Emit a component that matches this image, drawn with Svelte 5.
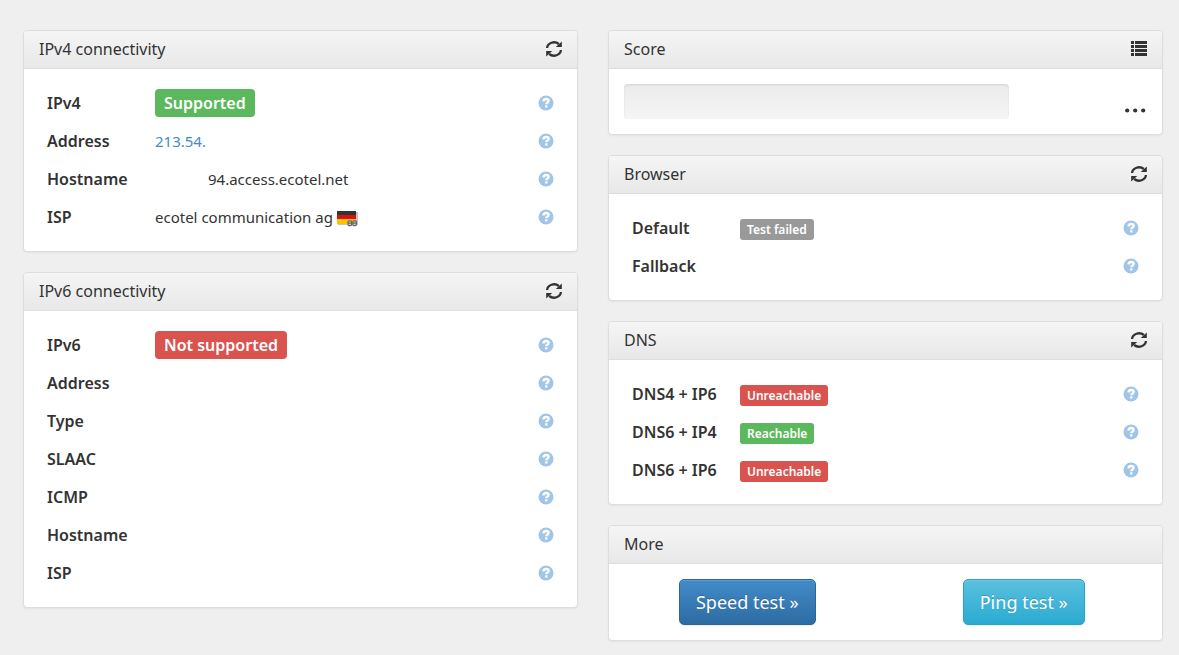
<script>
  const left = [
    {
      title: 'IPv4 connectivity',
      rows: [
        { label: 'IPv4', badge: 'Supported', tone: 'success', large: true },
        { label: 'Address', link: '213.54.' },
        { label: 'Hostname', text: '94.access.ecotel.net', masked: true },
        { label: 'ISP', text: 'ecotel communication ag', flag: true }
      ]
    },
    {
      title: 'IPv6 connectivity',
      rows: [
        { label: 'IPv6', badge: 'Not supported', tone: 'danger', large: true },
        { label: 'Address' },
        { label: 'Type' },
        { label: 'SLAAC' },
        { label: 'ICMP' },
        { label: 'Hostname' },
        { label: 'ISP' }
      ]
    }
  ];

  const right = [
    {
      title: 'Browser',
      rows: [
        { label: 'Default', badge: 'Test failed', tone: 'muted' },
        { label: 'Fallback' }
      ]
    },
    {
      title: 'DNS',
      rows: [
        { label: 'DNS4 + IP6', badge: 'Unreachable', tone: 'danger' },
        { label: 'DNS6 + IP4', badge: 'Reachable', tone: 'success' },
        { label: 'DNS6 + IP6', badge: 'Unreachable', tone: 'danger' }
      ]
    }
  ];
</script>

{#snippet refreshIcon()}
  <svg width="16" height="16" viewBox="0 0 16 16" aria-hidden="true">
    <path d="M1.1 7A6.9 6 0 0 1 12.8 3" fill="none" stroke="currentColor" stroke-width="2.3" />
    <path d="M15.8 0.6V6H9.8z" fill="currentColor" />
    <path d="M14.9 9A6.9 6 0 0 1 3.2 13" fill="none" stroke="currentColor" stroke-width="2.3" />
    <path d="M0.2 15.4V10H6.2z" fill="currentColor" />
  </svg>
{/snippet}

{#snippet helpIcon()}
  <svg width="16" height="16" viewBox="0 0 16 16" aria-hidden="true">
    <circle cx="8" cy="8" r="7.5" fill="#a0c5e8" />
    <path
      d="M5.6 6.4C5.6 4.7 6.6 4 8.1 4S10.6 4.8 10.6 6C10.6 7.5 8.3 7.5 8.3 9.3"
      fill="none"
      stroke="#fff"
      stroke-width="2.4"
    />
    <rect x="7.1" y="10.3" width="2.4" height="2.2" fill="#fff" />
  </svg>
{/snippet}

{#snippet flagIcon()}
  <svg class="flag" width="21" height="17" viewBox="0 0 21 17" role="img" aria-label="Germany">
    <rect x="1" y="2" width="20" height="13" fill="#c4c4c4" />
    <rect width="19" height="5" y="1" fill="#333" />
    <rect width="19" height="4" y="5" fill="#d9110c" />
    <rect width="19" height="5" y="9" fill="#f8c500" />
    <g fill="#ccc" stroke="#666" stroke-width="1.2">
      <rect x="11" y="10.8" width="3.6" height="4.8" rx="1" />
      <rect x="15.8" y="10.8" width="3.6" height="4.8" rx="1" />
      <path d="M11 13.2H14.6M15.8 13.2H19.4" />
    </g>
  </svg>
{/snippet}

{#snippet panel(group)}
  <section class="panel">
    <header>
      <h2>{group.title}</h2>
      <button class="icon" aria-label="Refresh {group.title}">{@render refreshIcon()}</button>
    </header>
    <div class="body">
      <table>
        <tbody>
          {#each group.rows as row}
            <tr>
              <th scope="row">{row.label}</th>
              <td>
                {#if row.badge}
                  <span class="badge {row.tone}" class:large={row.large}>{row.badge}</span>
                {:else if row.link}
                  <a href="#address">{row.link}</a>
                {:else if row.text}
                  <span class:masked={row.masked}>{row.text}</span>
                {/if}
                {#if row.flag}{@render flagIcon()}{/if}
              </td>
              <td class="help">
                <button class="icon" aria-label="About {row.label}">{@render helpIcon()}</button>
              </td>
            </tr>
          {/each}
        </tbody>
      </table>
    </div>
  </section>
{/snippet}

<main>
  <div class="column">
    {#each left as group}
      {@render panel(group)}
    {/each}
  </div>

  <div class="column">
    <section class="panel">
      <header>
        <h2>Score</h2>
        <button class="icon" aria-label="Score details">
          <svg width="16" height="16" viewBox="0 0 16 16" aria-hidden="true">
            <path
              d="M0 0H3V3H0zM4 0H16V3H4zM0 4H3V7H0zM4 4H16V7H4zM0 8H3V11H0zM4 8H16V11H4zM0 12H3V15H0zM4 12H16V15H4z"
              fill="currentColor"
            />
          </svg>
        </button>
      </header>
      <div class="score">
        <div class="cell"><div class="progress" role="progressbar" aria-label="Score"></div></div>
        <div class="cell dots">
          <svg width="22" height="18" viewBox="0 0 22 18" aria-hidden="true">
            <g fill="#333">
              <circle cx="2.2" cy="9.5" r="2.1" />
              <circle cx="10.2" cy="9.5" r="2.1" />
              <circle cx="18.2" cy="9.5" r="2.1" />
            </g>
          </svg>
        </div>
      </div>
    </section>

    {#each right as group}
      {@render panel(group)}
    {/each}

    <section class="panel">
      <header><h2>More</h2></header>
      <div class="more">
        <a class="btn primary" href="#speed">Speed test »</a>
        <a class="btn info" href="#ping">Ping test »</a>
      </div>
    </section>
  </div>
</main>

<style>
  :global(body) {
    margin: 0;
    background: #efefef;
  }

  main {
    display: grid;
    grid-template-columns: 1fr 1fr;
    gap: 30px;
    align-items: start;
    padding: 30px 16px 14px 23px;
    font-family: 'Noto Sans', 'Open Sans', sans-serif;
    font-size: 15px;
    line-height: 22px;
    color: #333;
  }

  .column {
    display: flex;
    flex-direction: column;
    gap: 20px;
    min-width: 0;
  }

  .panel {
    background: #fff;
    border: 1px solid #ddd;
    border-radius: 4px;
    box-shadow: 0 1px 2px rgba(0, 0, 0, 0.05);
    overflow: hidden;
  }

  header {
    display: flex;
    align-items: center;
    justify-content: space-between;
    box-sizing: border-box;
    height: 38px;
    padding: 0 15px 1px;
    border-bottom: 1px solid #ddd;
    background: linear-gradient(to bottom, #f5f5f5, #e8e8e8);
  }

  h2 {
    margin: 0;
    font-size: 16px;
    font-weight: 400;
  }

  .icon {
    display: block;
    padding: 0;
    border: 0;
    background: none;
    color: inherit;
    cursor: pointer;
  }

  .icon svg {
    display: block;
  }

  .body {
    padding: 15px;
  }

  table {
    width: 100%;
    border-collapse: collapse;
    table-layout: fixed;
  }

  tr {
    height: 38px;
  }

  th,
  td {
    padding: 0 8px;
    text-align: left;
    vertical-align: middle;
    white-space: nowrap;
  }

  th {
    width: 92px;
    font-size: 16px;
    font-weight: 600;
  }

  .help {
    width: 16px;
  }

  a {
    color: #428bca;
    text-decoration: none;
  }

  .masked {
    padding-left: 53px;
  }

  .flag {
    vertical-align: -4px;
  }

  .badge {
    display: inline-block;
    padding: 0 7px;
    border-radius: 3px;
    font-size: 12px;
    font-weight: 600;
    line-height: 21px;
    color: #fff;
    vertical-align: middle;
  }

  .badge.large {
    padding: 0 9px;
    border-radius: 4px;
    font-size: 16px;
    line-height: 28px;
  }

  .success {
    background: #5cb85c;
  }

  .danger {
    background: #d9534f;
  }

  .muted {
    background: #999;
  }

  .score {
    display: grid;
    grid-template-columns: 3fr 1fr;
    padding: 15px 0;
  }

  .cell {
    padding: 0 15px;
  }

  .progress {
    height: 35px;
    border-radius: 4px;
    background: linear-gradient(to bottom, #ebebeb, #f5f5f5);
    box-shadow: inset 0 1px 2px rgba(0, 0, 0, 0.1);
  }

  .dots {
    display: flex;
    align-items: flex-end;
    justify-content: flex-end;
  }

  .more {
    display: grid;
    grid-template-columns: 1fr 1fr;
    justify-items: center;
    padding: 15px 0;
  }

  .btn {
    padding: 10px 16px;
    border: 1px solid;
    border-radius: 5px;
    font-size: 18px;
    line-height: 24px;
    color: #fff;
    text-shadow: 0 -1px 0 rgba(0, 0, 0, 0.2);
    box-shadow:
      inset 0 1px 0 rgba(255, 255, 255, 0.15),
      0 1px 1px rgba(0, 0, 0, 0.075);
  }

  .primary {
    border-color: #2b669a;
    background: linear-gradient(to bottom, #428bca, #2d6ca2);
  }

  .info {
    border-color: #28a4c9;
    background: linear-gradient(to bottom, #5bc0de, #2aabd2);
  }
</style>
